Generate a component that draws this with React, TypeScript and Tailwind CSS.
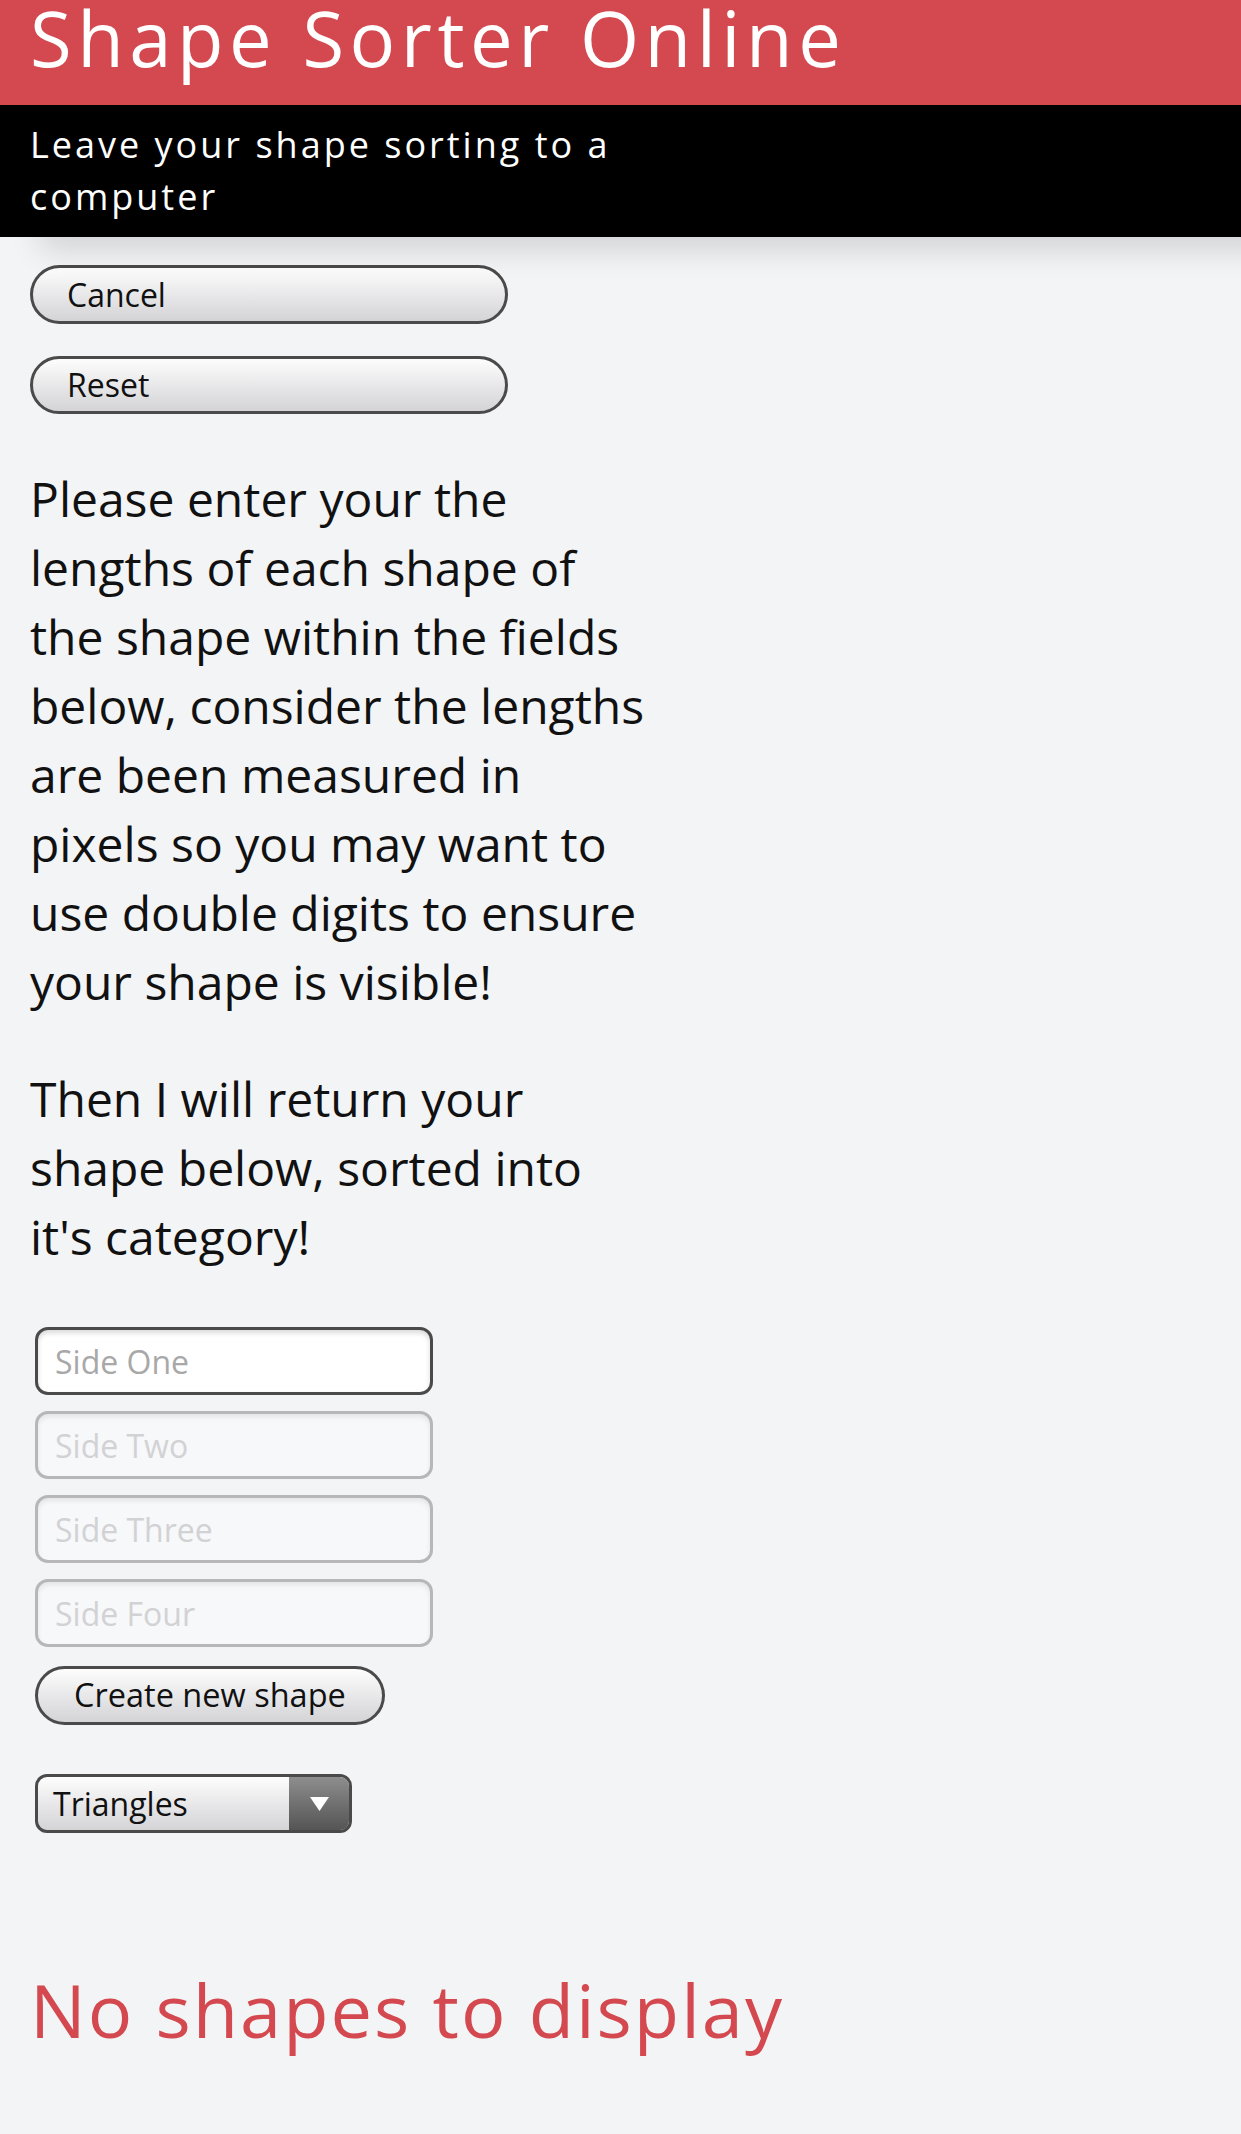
import { useState } from "react";

const sides = ["Side One", "Side Two", "Side Three", "Side Four"];

function PillButton({ label, className }: { label: string; className: string }) {
  return (
    <button
      type="button"
      className={`flex items-center rounded-full border-[3px] border-[#4a4a4a] bg-gradient-to-b from-[#fdfdfd] to-[#d4d4d7] px-[34px] text-left leading-none text-[#111] ${className}`}
    >
      {label}
    </button>
  );
}

export default function App() {
  const [values, setValues] = useState(["", "", "", ""]);
  const [category, setCategory] = useState("Triangles");

  return (
    <div className="min-h-screen bg-[#f3f4f6] font-['Open_Sans',sans-serif]">
      <header className="relative shadow-[40px_12px_30px_rgba(0,0,0,0.14)]">
        <div className="h-[105px] bg-[#d4494f] px-[30px]">
          <h1 className="text-[76px] leading-[76px] tracking-[5.5px] text-white">
            Shape Sorter Online
          </h1>
        </div>
        <div className="bg-black px-[30px] py-[14px]">
          <p className="max-w-[620px] text-[36px] leading-[52px] tracking-[3px] text-white">
            Leave your shape sorting to a computer
          </p>
        </div>
      </header>

      <main className="px-[30px] pt-[28px] pb-[80px]">
        <div className="flex flex-col gap-[32px]">
          <PillButton label="Cancel" className="h-[59px] w-[478px] text-[32px]" />
          <PillButton label="Reset" className="h-[58px] w-[478px] text-[32px]" />
        </div>

        <div className="mt-[50px] max-w-[620px] text-[48px] leading-[69px] text-[#111]">
          <p>
            Please enter your the lengths of each shape of the shape within the
            fields below, consider the lengths are been measured in pixels so you
            may want to use double digits to ensure your shape is visible!
          </p>
          <p className="mt-[48px]">
            Then I will return your shape below, sorted into it's category!
          </p>
        </div>

        <div className="mt-[56px] flex flex-col pl-[5px]">
          <div className="flex flex-col gap-[16px]">
            {sides.map((side, i) => (
              <input
                key={side}
                value={values[i]}
                placeholder={side}
                onChange={(e) =>
                  setValues((v) => v.map((x, j) => (j === i ? e.target.value : x)))
                }
                className={
                  i === 0
                    ? "h-[68px] w-[398px] rounded-[13px] border-[3px] border-[#4a4a4a] bg-white px-[17px] text-[32px] text-[#222] shadow-[inset_0_3px_5px_rgba(0,0,0,0.15)] outline-none placeholder:text-[#a8a8a8]"
                    : "h-[68px] w-[398px] rounded-[13px] border-[3px] border-[#b7b7b9] bg-[#f7f8fa] px-[17px] text-[32px] text-[#222] shadow-[inset_0_3px_5px_rgba(0,0,0,0.08)] outline-none placeholder:text-[#d2d2d4]"
                }
              />
            ))}
          </div>

          <PillButton
            label="Create new shape"
            className="mt-[19px] h-[59px] w-fit px-[36px] text-[32.5px]"
          />

          <label className="relative mt-[49px] flex h-[59px] w-[317px] overflow-hidden rounded-[12px] border-[3px] border-[#4a4a4a] bg-gradient-to-b from-[#fdfdfd] to-[#d4d4d7]">
            <span className="flex flex-1 items-center pl-[15px] text-[32px] text-[#111]">
              {category}
            </span>
            <span className="flex w-[60px] items-center justify-center bg-gradient-to-b from-[#8e8e8e] to-[#555]">
              <svg width="19" height="14" viewBox="0 0 19 14">
                <path d="M0 0 H19 L9.5 14 Z" fill="#fff" />
              </svg>
            </span>
            <select
              value={category}
              onChange={(e) => setCategory(e.target.value)}
              className="absolute inset-0 opacity-0"
            >
              <option>Triangles</option>
              <option>Quadrilaterals</option>
            </select>
          </label>
        </div>

        <h2 className="mt-[133px] text-[74px] leading-[88px] tracking-[2px] text-[#d4494f]">
          No shapes to display
        </h2>
      </main>
    </div>
  );
}
